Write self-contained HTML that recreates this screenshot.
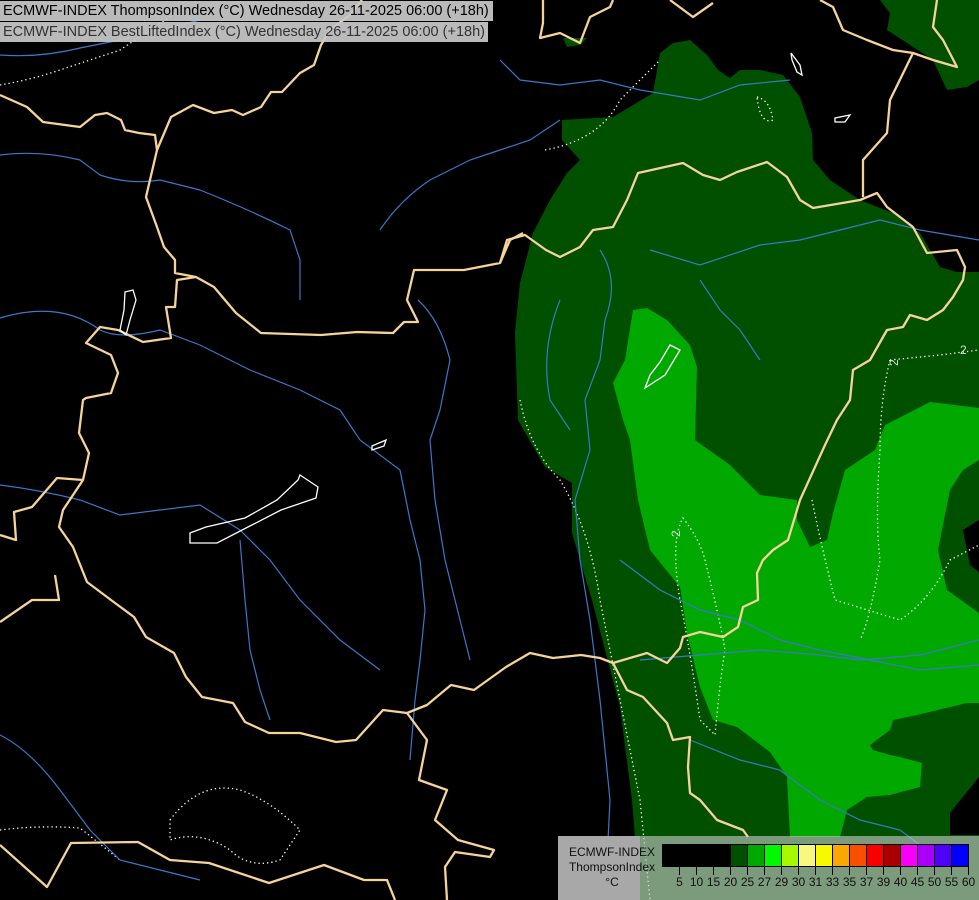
<!DOCTYPE html>
<html><head><meta charset="utf-8"><style>
html,body{margin:0;padding:0;background:#000;width:979px;height:900px;overflow:hidden}
svg{position:absolute;left:0;top:0}
.hdr{position:absolute;left:0;font-family:"Liberation Sans",sans-serif;font-size:14.5px;background:rgba(200,200,200,0.93);padding:0 4px 0 3px;height:20px;line-height:20px;white-space:nowrap}
.lg{position:absolute;font-family:"Liberation Sans",sans-serif;font-size:12px;color:#111}
</style></head><body>
<svg width="979" height="900" viewBox="0 0 979 900">
<!-- dark green -->
<polygon fill="#005000" points="562,120 613,117 653,93 660,53 673,43 690,40 707,55 718,70 730,78 740,70 760,70 783,75 800,97 812,133 813,160 830,180 860,200 893,213 920,233 940,267 957,272 979,270 979,900 640,900 632,800 620,707 592,600 572,533 572,483 545,467 518,420 515,333 520,283 533,233 550,200 567,173 580,160 562,140"/>
<polygon fill="#005000" points="880,0 979,0 979,80 967,87 947,90 933,60 907,43 887,30 890,13"/>
<polygon fill="#005000" points="563,38 587,38 580,45 567,47"/>
<!-- black holes -->
<polygon fill="#000" points="963,530 979,520 979,572 970,565"/>
<polygon fill="#000" points="950,813 979,777 979,835 950,835"/>
<polygon fill="#000" points="940,267 957,250 979,255 979,272 957,272"/>
<!-- bright green -->
<polygon fill="#00a800" points="633,310 647,308 667,320 690,345 697,367 695,440 730,465 760,495 797,500 797,520 810,547 827,540 833,513 845,470 875,450 885,425 930,402 979,408 979,460 963,470 950,490 938,550 947,590 979,613 979,703 967,703 917,715 893,720 890,730 870,745 873,750 890,755 900,757 922,763 920,787 890,795 867,797 847,810 840,837 790,837 787,777 770,752 737,727 713,720 700,687 687,633 680,587 650,550 638,500 630,440 623,420 613,383 625,360"/>
<!-- dotted contours -->
<g fill="none" stroke="#fff" stroke-width="1.3" stroke-dasharray="1.3 3">
<path d="M520,400 Q530,450 560,480 Q590,530 600,600 Q620,700 640,800 L650,900"/>
<path d="M683,518 Q700,540 705,560 Q720,620 725,650 Q720,680 715,735 L700,720 Q690,650 680,600 Q670,540 683,518Z"/>
<path d="M812,500 Q820,540 835,600 L900,620 Q930,600 950,560 L979,545"/>
<path d="M890,360 L940,355 979,350"/>
<path d="M890,360 Q880,400 880,450 Q875,520 880,560 Q870,620 860,640"/>
<path d="M545,150 Q600,140 620,100 L660,60 M757,97 Q770,100 773,120 Q760,125 757,97Z"/>
<path d="M0,85 Q30,80 60,70 Q90,60 120,50 Q150,30 180,10"/>
<path d="M170,820 Q200,780 240,790 Q270,800 300,830 L280,860 Q250,870 230,850 Q200,830 170,840Z"/>
<path d="M0,830 Q40,825 80,828 L120,860"/>
</g>
<!-- rivers -->
<g fill="none" stroke="#3a78c8" stroke-width="1.2">
<path d="M0,155 Q40,150 80,160 L100,175 Q130,185 160,180 L200,190 Q250,210 290,230 L300,260 300,300"/>
<path d="M0,318 Q60,300 100,330 Q120,340 160,330 L200,345 250,370 300,390 340,410 360,440 400,470 410,520 420,560 425,610 420,660 415,700 410,760"/>
<path d="M0,485 Q40,490 80,500 L120,515 160,510 200,505 240,530 270,560 300,600 340,640 380,670"/>
<path d="M240,540 L245,600 250,650 260,690 270,720"/>
<path d="M0,735 Q30,750 60,790 L90,830 120,860 160,870 200,880"/>
<path d="M418,300 Q440,320 450,360 L440,410 430,440 435,500 445,560 460,620 470,660"/>
<path d="M380,230 Q400,200 430,180 L470,160 500,150 530,140 560,120"/>
<path d="M500,60 L520,80 560,85 600,80 640,90 700,100 740,85 790,80"/>
<path d="M0,55 Q40,58 80,48 L120,40 160,30 200,20"/>
<path d="M600,250 Q620,280 605,320 L600,360 585,400 590,450 575,500 580,560 590,620 600,700 610,800 605,900"/>
<path d="M620,560 L660,590 700,610 740,620 780,640 820,650 870,660 920,670 979,665"/>
<path d="M640,660 L700,655 760,650 820,655 860,660 920,655 979,640"/>
<path d="M560,300 Q540,350 550,400 L570,430"/>
<path d="M650,250 L700,265 760,245 800,240 840,230 880,220 920,230 979,240"/>
<path d="M700,280 L720,310 740,330 760,360"/>
<path d="M690,740 L740,760 780,770 820,800 860,820 900,830 940,860"/>
</g>
<!-- borders -->
<g fill="none" stroke="#f5d39b" stroke-width="2.3" stroke-linejoin="round">
<path d="M0,95 L27,107 43,122 80,127 95,115 107,113 121,120 125,130 139,133 155,135 157,150 146,197 157,227 164,247 175,260 175,273 196,277 214,287 236,313 261,333 321,335 357,332 393,333 404,322 418,322 407,300 414,270 464,270 500,263 507,240 525,235 546,250 560,257 580,247 593,230 613,227 627,200 638,173 683,163 703,175 720,180 737,172 767,162 787,177 800,200 813,208 860,200 877,193 887,207 913,227 927,253 957,250 965,267 963,280 953,297 943,310 927,320 910,315 903,327 887,330 870,360 853,370 850,400 837,420 825,445 800,500 788,540 773,550 763,560 757,573 758,600 743,607 738,627 723,637 700,632 683,637 680,648 667,663 647,653 613,663 600,658 581,655 553,658 530,653 506,667 474,690 451,685 427,705 407,713 383,710 356,740 336,742 300,733 269,733 245,722 233,703 202,697 186,677 174,653 146,637 134,617 115,603 87,582 73,547 59,527 63,510 83,480 89,453 79,433 83,400 86,398 111,393 118,373 111,355 86,343 100,327 118,330 143,342 171,338 166,307 175,307 177,280 196,277"/>
<path d="M157,150 L171,117 193,105 214,113 232,110 243,115 261,107 271,92 282,92 300,73 314,65 321,45 330,30 350,15 362,0"/>
<path d="M83,480 L57,478 32,507 14,512 16,540 0,535"/>
<path d="M55,575 L59,600 32,600 0,622"/>
<path d="M407,713 L427,740 419,780 447,790 435,820 458,840 494,850 490,857 455,852 445,867 447,900"/>
<path d="M0,845 L47,887 71,843 138,842 170,860 209,863 269,883 324,865 364,880 387,880 395,900"/>
<path d="M613,663 L627,690 643,697 667,723 673,740 690,737 688,767 690,793 700,800 717,820 743,830 748,837"/>
<path d="M863,197 L863,160 887,133 890,100 913,53 893,50 867,40 843,30 833,7 820,0"/>
<path d="M913,53 L933,60 957,67 943,40 933,27 937,0"/>
<path d="M543,0 L543,23 540,38 560,33 580,43 590,17 610,7 613,0"/>
<path d="M670,0 L693,17 713,3"/>
<path d="M500,263 L510,240 523,233"/>
</g>
<!-- lakes -->
<g fill="none" stroke="#fff" stroke-width="1.3">
<polygon points="300,475 318,487 316,498 281,510 217,543 190,543 190,533 206,527 245,518 277,500 298,480"/>
<path d="M125,292 L133,290 136,300 130,320 126,335 120,330 124,310Z"/>
<path d="M372,446 L386,440 384,446 372,450Z"/>
<path d="M791,53 L800,65 802,75 797,72 792,60Z"/>
<path d="M835,118 L850,115 845,122 835,122Z"/>
<path d="M670,345 L680,350 665,375 645,388 650,375 660,362Z"/>
</g>
</svg>
<div class="hdr" style="top:1px;color:#000">ECMWF-INDEX ThompsonIndex (°C) Wednesday 26-11-2025 06:00 (+18h)</div>
<div class="hdr" style="top:22px;color:#333;padding-right:3px">ECMWF-INDEX BestLiftedIndex (°C) Wednesday 26-11-2025 06:00 (+18h)</div>
<!-- legend -->
<div style="position:absolute;left:558px;top:836px;width:82px;height:64px;background:#a8a8a8"></div>
<div style="position:absolute;left:640px;top:836px;width:339px;height:64px;background:rgba(200,200,200,0.62)"></div>
<div class="lg" style="left:558px;top:845px;width:108px;text-align:center;line-height:15px">ECMWF-INDEX<br>ThompsonIndex<br>°C</div>
<svg width="979" height="900" style="pointer-events:none">
<g stroke="#000" stroke-width="1">
<rect x="662.5" y="844.5" width="17" height="22" fill="#000"/>
<rect x="679.5" y="844.5" width="17" height="22" fill="#000"/>
<rect x="696.5" y="844.5" width="17" height="22" fill="#000"/>
<rect x="713.5" y="844.5" width="17" height="22" fill="#000"/>
<rect x="730.5" y="844.5" width="17" height="22" fill="#005000"/>
<rect x="747.5" y="844.5" width="17" height="22" fill="#00a800"/>
<rect x="764.5" y="844.5" width="17" height="22" fill="#00f800"/>
<rect x="781.5" y="844.5" width="17" height="22" fill="#a8f800"/>
<rect x="798.5" y="844.5" width="17" height="22" fill="#f8f880"/>
<rect x="815.5" y="844.5" width="17" height="22" fill="#f8f800"/>
<rect x="832.5" y="844.5" width="17" height="22" fill="#f8a800"/>
<rect x="849.5" y="844.5" width="17" height="22" fill="#f85000"/>
<rect x="866.5" y="844.5" width="17" height="22" fill="#f80000"/>
<rect x="883.5" y="844.5" width="17" height="22" fill="#a80000"/>
<rect x="900.5" y="844.5" width="17" height="22" fill="#f800f8"/>
<rect x="917.5" y="844.5" width="17" height="22" fill="#a800f8"/>
<rect x="934.5" y="844.5" width="17" height="22" fill="#5000f8"/>
<rect x="951.5" y="844.5" width="17" height="22" fill="#0000f8"/>
<path d="M679.5,867V875M696.5,867V875M713.5,867V875M730.5,867V875M747.5,867V875M764.5,867V875M781.5,867V875M798.5,867V875M815.5,867V875M832.5,867V875M849.5,867V875M866.5,867V875M883.5,867V875M900.5,867V875M917.5,867V875M934.5,867V875M951.5,867V875M968.5,867V875"/>
</g>
<g font-family="Liberation Sans, sans-serif" font-size="12" fill="#111" text-anchor="middle">
<text x="679.5" y="886">5</text><text x="696.5" y="886">10</text><text x="713.5" y="886">15</text><text x="730.5" y="886">20</text><text x="747.5" y="886">25</text><text x="764.5" y="886">27</text><text x="781.5" y="886">29</text><text x="798.5" y="886">30</text><text x="815.5" y="886">31</text><text x="832.5" y="886">33</text><text x="849.5" y="886">35</text><text x="866.5" y="886">37</text><text x="883.5" y="886">39</text><text x="900.5" y="886">40</text><text x="917.5" y="886">45</text><text x="934.5" y="886">50</text><text x="951.5" y="886">55</text><text x="968.5" y="886">60</text>
</g>
<g font-family="Liberation Sans, sans-serif" font-size="12" fill="#ddd">
<text x="960" y="354">2</text><text x="890" y="366" transform="rotate(-90 894 362)">2</text><text x="672" y="537" transform="rotate(-90 676 533)">2</text>
</g>
</svg>
</body></html>
